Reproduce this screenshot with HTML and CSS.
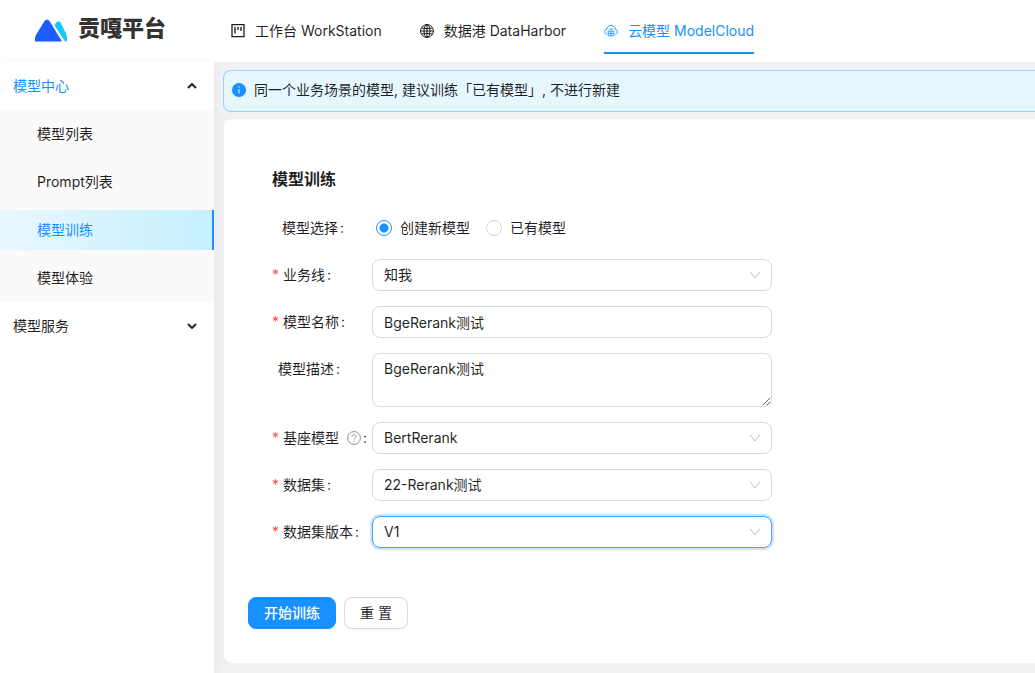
FILE: index.html
```html
<!DOCTYPE html>
<html lang="zh-CN">
<head>
<meta charset="utf-8">
<meta name="viewport" content="width=device-width, initial-scale=1">
<title>贡嘎平台</title>
<link rel="stylesheet" href="styles.css">
</head>
<body>
<div class="app">
  <header class="header">
    <a class="brand" href="#">
      <svg class="brand-mark" viewBox="0 0 33 23" aria-hidden="true">
        <path fill="#15c8ff" d="M19.500 6.500L21 3.800Q23.300 1 25.800 3.800L31 14.500Q32 17 32 19V21Q32 22.500 30.500 22.500H30Z"/>
        <path fill="#1a5cff" d="M0 19.500Q0 17.500 1 16L9.500 2Q12-1.200 14.500 2L27 22.500H0Z"/>
      </svg>
      <span class="brand-name">贡嘎平台</span>
    </a>
    <nav class="topnav">
      <a class="topnav-item" href="#">
        <svg class="icon" viewBox="0 0 14 14" fill="none" stroke="currentColor" aria-hidden="true">
          <rect x="1" y=".6" width="12" height="12" stroke-width="1.300"/>
          <path d="M4 3v6.500M7 3v3M10 3v4" stroke-width="1.400"/>
        </svg>
        <span>工作台 WorkStation</span>
      </a>
      <a class="topnav-item" href="#">
        <svg class="icon" viewBox="0 0 14 14" fill="none" stroke="currentColor" aria-hidden="true">
          <circle cx="7" cy="7" r="6.400"/>
          <ellipse cx="7" cy="7" rx="3" ry="6.400"/>
          <path d="M7 .6v12.800M.6 7h12.800M1.500 4q5.500 1.300 11 0M1.500 10q5.500-1.300 11 0"/>
        </svg>
        <span>数据港 DataHarbor</span>
      </a>
      <a class="topnav-item topnav-item-active" href="#" aria-current="page">
        <svg class="icon" viewBox="0 0 14 14" fill="none" stroke="currentColor" aria-hidden="true">
          <path d="M2.700 10.300C-.3 9.300.1 5.600 2.700 5.200 3.700.2 10.300.2 11.300 5.200c2.600.4 3 4.100 0 5.100"/>
          <path d="M4.800 5.200h4.400M4.200 7.200h5.600v4.600H4.200zM7 7.200v4.600M4.200 9.500h5.600" stroke-width=".9"/>
        </svg>
        <span>云模型 ModelCloud</span>
      </a>
    </nav>
  </header>
  <div class="body">
    <aside class="sidebar">
      <button class="menu-title menu-title-active" type="button" aria-expanded="true">
        <span>模型中心</span>
        <svg class="menu-arrow" viewBox="0 0 10 6" aria-hidden="true"><path d="M1 5l4-4 4 4"/></svg>
      </button>
      <nav class="submenu">
        <a class="submenu-item" href="#">模型列表</a>
        <a class="submenu-item" href="#">Prompt列表</a>
        <a class="submenu-item submenu-item-active" href="#" aria-current="page">模型训练</a>
        <a class="submenu-item" href="#">模型体验</a>
      </nav>
      <button class="menu-title" type="button" aria-expanded="false">
        <span>模型服务</span>
        <svg class="menu-arrow" viewBox="0 0 10 6" aria-hidden="true"><path d="M1 1l4 4 4-4"/></svg>
      </button>
    </aside>
    <main class="main">
      <div class="alert" role="status">
        <svg class="icon" viewBox="0 0 14 14" aria-hidden="true">
          <circle cx="7" cy="7" r="7" fill="#1890ff"/>
          <path d="M7 6v4.500M7 3.300v1.400" stroke="#e6f7ff" stroke-width="1.100"/>
        </svg>
        <span>同一个业务场景的模型, 建议训练「已有模型」, 不进行新建</span>
      </div>
      <form class="card">
        <div class="fields">
          <h1 class="title">模型训练</h1>
          <div class="row" role="radiogroup" aria-labelledby="source-label">
            <span class="label label-indent-wide" id="source-label">模型选择<span class="colon">:</span></span>
            <div class="radios">
              <label class="radio"><input type="radio" name="source" checked><span>创建新模型</span></label>
              <label class="radio"><input type="radio" name="source"><span>已有模型</span></label>
            </div>
          </div>
          <div class="row">
            <label class="label label-required" for="line">业务线<span class="colon">:</span></label>
            <div class="select">
              <select class="control" id="line"><option>知我</option></select>
              <svg class="select-arrow" viewBox="0 0 12 8" aria-hidden="true"><path d="M1 .5l5 6.500 5-6.500"/></svg>
            </div>
          </div>
          <div class="row">
            <label class="label label-required" for="name">模型名称<span class="colon">:</span></label>
            <input class="control" id="name" type="text" value="BgeRerank测试">
          </div>
          <div class="row">
            <label class="label label-indent" for="desc">模型描述<span class="colon">:</span></label>
            <textarea class="control control-area" id="desc" rows="2">BgeRerank测试</textarea>
          </div>
          <div class="row">
            <label class="label label-required" for="base">基座模型
              <svg class="icon help" viewBox="0 0 14 14" fill="none" stroke="currentColor" aria-hidden="true">
                <circle cx="7" cy="7" r="6.400"/>
                <path d="M5 5.600C5 3 9 3 9 5.500 9 7 7 6.900 7 8.700M7 9.700v1.200"/>
              </svg><span class="colon">:</span></label>
            <div class="select">
              <select class="control" id="base"><option>BertRerank</option></select>
              <svg class="select-arrow" viewBox="0 0 12 8" aria-hidden="true"><path d="M1 .5l5 6.500 5-6.500"/></svg>
            </div>
          </div>
          <div class="row">
            <label class="label label-required" for="dataset">数据集<span class="colon">:</span></label>
            <div class="select">
              <select class="control" id="dataset"><option>22-Rerank测试</option></select>
              <svg class="select-arrow" viewBox="0 0 12 8" aria-hidden="true"><path d="M1 .5l5 6.500 5-6.500"/></svg>
            </div>
          </div>
          <div class="row">
            <label class="label label-required" for="version">数据集版本<span class="colon">:</span></label>
            <div class="select">
              <select class="control control-focused" id="version"><option>V1</option></select>
              <svg class="select-arrow" viewBox="0 0 12 8" aria-hidden="true"><path d="M1 .5l5 6.500 5-6.500"/></svg>
            </div>
          </div>
        </div>
        <div class="actions">
          <button class="btn btn-primary" type="submit">开始训练</button>
          <button class="btn" type="reset">重 置</button>
        </div>
      </form>
    </main>
  </div>
</div>
</body>
</html>
```
FILE: styles.css
```css
* {
  box-sizing: border-box;
}

body {
  margin: 0;
  font: 14px/22px Inter, "Noto Sans CJK SC", sans-serif;
  color: rgba(0, 0, 0, 0.88);
  background: #f1f1f3;
}

a {
  color: inherit;
  text-decoration: none;
}

button,
input,
select,
textarea {
  font: inherit;
  color: inherit;
}

.app {
  display: flex;
  flex-direction: column;
  min-height: 100vh;
}

.icon {
  flex: none;
  width: 14px;
  height: 14px;
}

.header {
  display: flex;
  align-items: stretch;
  height: 62px;
  background: #fff;
}

.brand {
  display: flex;
  align-items: center;
  flex: none;
  gap: 10px;
  width: 231px;
  padding: 0 0 6px 35px;
}

.brand-mark {
  width: 33px;
  height: 23px;
  margin-top: 4px;
}

.brand-name {
  font-size: 22px;
  line-height: 32px;
  font-weight: 900;
  color: #333;
}

.topnav {
  display: flex;
  gap: 38px;
  padding: 8px 0;
}

.topnav-item {
  display: flex;
  align-items: center;
  gap: 10px;
  white-space: nowrap;
  border-bottom: 2px solid transparent;
  border-top: 2px solid transparent;
}

.topnav-item-active {
  color: #1890ff;
  border-bottom-color: #1890ff;
}

.body {
  display: flex;
  flex: 1;
}

.sidebar {
  flex: none;
  width: 214px;
  background: #fff;
  box-shadow: 2px 0 8px rgba(0, 0, 0, 0.04);
}

.menu-title {
  display: flex;
  align-items: center;
  justify-content: space-between;
  width: 100%;
  height: 48px;
  padding: 0 17px 0 13px;
  border: 0;
  background: none;
}

.menu-title-active {
  color: #1890ff;
}

.menu-arrow {
  width: 10px;
  height: 6px;
  fill: none;
  stroke: #222;
  stroke-width: 2;
}

.submenu {
  display: flex;
  flex-direction: column;
  gap: 8px;
  padding: 4px 0;
  background: #fafafa;
}

.submenu-item {
  padding-left: 37px;
  line-height: 40px;
}

.submenu-item-active {
  color: #1890ff;
  border-right: 2px solid #1890ff;
  background: linear-gradient(90deg, #e9f7ff, #c5f0ff);
}

.main {
  display: flex;
  flex-direction: column;
  flex: 1;
  gap: 7px;
  min-width: 0;
  padding: 8px 0 10px 9px;
}

.alert {
  display: flex;
  align-items: center;
  gap: 8px;
  padding: 8px 8px 10px;
  border: 1px solid #91d5ff;
  border-right: 0;
  border-radius: 8px 0 0 8px;
  background: #e6f7ff;
}

.card {
  flex: 1;
  margin-left: 1px;
  padding: 48px 24px 34px;
  border-radius: 8px 0 0 8px;
  background: #fff;
}

.fields {
  display: flex;
  flex-direction: column;
  gap: 15px;
  padding-left: 24px;
}

.title {
  margin: 0 0 6px;
  font-size: 16px;
  line-height: 24px;
  font-weight: 700;
}

.row {
  display: grid;
  grid-template-columns: 100px minmax(0, 400px);
}

.label {
  display: flex;
  align-items: center;
  height: 32px;
  white-space: nowrap;
}

.label-required::before {
  content: "*";
  width: 11px;
  color: #ff4d4f;
}

.label-indent {
  padding-left: 6px;
}

.label-indent-wide {
  padding-left: 10px;
}

.colon {
  margin-left: 2px;
}

.help {
  margin-left: 8px;
  color: #8c8c8c;
}

.radios {
  display: flex;
  align-items: center;
  gap: 16px;
  padding-left: 4px;
}

.radio {
  display: flex;
  align-items: center;
  gap: 8px;
}

.radio input {
  appearance: none;
  width: 16px;
  height: 16px;
  margin: 0;
  border: 1px solid #d9d9d9;
  border-radius: 50%;
}

.radio input:checked {
  border-color: #1890ff;
  background: radial-gradient(circle, #1890ff 4px, #fff 5px);
}

.select {
  position: relative;
}

.select-arrow {
  position: absolute;
  top: 12px;
  right: 11px;
  width: 12px;
  height: 8px;
  fill: none;
  stroke: #bfbfbf;
  pointer-events: none;
}

.control {
  display: block;
  appearance: none;
  width: 100%;
  height: 32px;
  padding: 4px 11px;
  border: 1px solid #d9d9d9;
  border-radius: 8px;
  outline: 0;
  background: #fff;
}

.control-area {
  height: 54px;
  resize: vertical;
}

.control-focused {
  border-color: #40a9ff;
  box-shadow: 0 0 0 2px rgba(24, 120, 255, 0.2);
}

.actions {
  display: flex;
  gap: 8px;
  margin-top: 49px;
}

.btn {
  height: 32px;
  padding: 0 15px;
  border: 1px solid #d9d9d9;
  border-radius: 8px;
  background: #fff;
  box-shadow: 0 2px 0 rgba(0, 0, 0, 0.02);
}

.btn-primary {
  border-color: #1890ff;
  color: #fff;
  background: #1890ff;
  font-weight: 500;
}
```
